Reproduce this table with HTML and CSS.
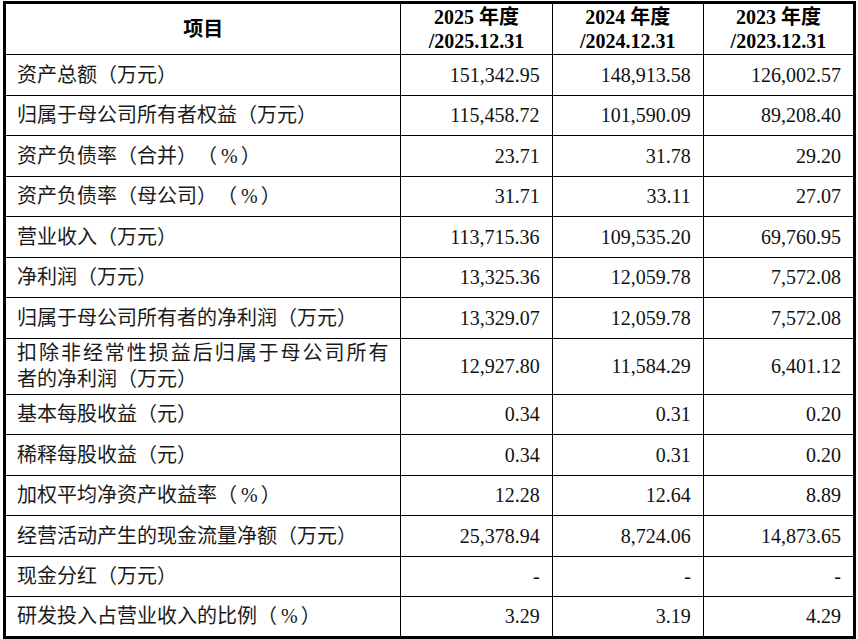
FILE: index.html
```html
<!DOCTYPE html>
<html lang="zh-CN">
<head>
<meta charset="utf-8">
<title>主要财务数据</title>
<link rel="stylesheet" href="styles.css">
</head>
<body>
<table class="fin">
  <colgroup>
    <col class="c-item">
    <col class="c-num">
    <col class="c-num">
    <col class="c-num">
  </colgroup>
  <thead>
    <tr class="head">
      <th>项目</th>
      <th>2025 年度<br>/2025.12.31</th>
      <th>2024 年度<br>/2024.12.31</th>
      <th>2023 年度<br>/2023.12.31</th>
    </tr>
  </thead>
  <tbody>
    <tr><td class="lbl">资产总额（万元）</td><td>151,342.95</td><td>148,913.58</td><td>126,002.57</td></tr>
    <tr><td class="lbl">归属于母公司所有者权益（万元）</td><td>115,458.72</td><td>101,590.09</td><td>89,208.40</td></tr>
    <tr><td class="lbl">资产负债率（合并）（<span class="pct">%</span>）</td><td>23.71</td><td>31.78</td><td>29.20</td></tr>
    <tr><td class="lbl">资产负债率（母公司）（<span class="pct">%</span>）</td><td>31.71</td><td>33.11</td><td>27.07</td></tr>
    <tr><td class="lbl">营业收入（万元）</td><td>113,715.36</td><td>109,535.20</td><td>69,760.95</td></tr>
    <tr><td class="lbl">净利润（万元）</td><td>13,325.36</td><td>12,059.78</td><td>7,572.08</td></tr>
    <tr><td class="lbl">归属于母公司所有者的净利润（万元）</td><td>13,329.07</td><td>12,059.78</td><td>7,572.08</td></tr>
    <tr class="tall"><td class="lbl"><span class="jline">扣除非经常性损益后归属于母公司所有</span>者的净利润（万元）</td><td>12,927.80</td><td>11,584.29</td><td>6,401.12</td></tr>
    <tr><td class="lbl">基本每股收益（元）</td><td>0.34</td><td>0.31</td><td>0.20</td></tr>
    <tr><td class="lbl">稀释每股收益（元）</td><td>0.34</td><td>0.31</td><td>0.20</td></tr>
    <tr><td class="lbl">加权平均净资产收益率（<span class="pct">%</span>）</td><td>12.28</td><td>12.64</td><td>8.89</td></tr>
    <tr><td class="lbl">经营活动产生的现金流量净额（万元）</td><td>25,378.94</td><td>8,724.06</td><td>14,873.65</td></tr>
    <tr><td class="lbl">现金分红（万元）</td><td>-</td><td>-</td><td>-</td></tr>
    <tr><td class="lbl">研发投入占营业收入的比例（<span class="pct">%</span>）</td><td>3.29</td><td>3.19</td><td>4.29</td></tr>
  </tbody>
</table>
</body>
</html>
```

FILE: styles.css
```css
html, body {
  margin: 0;
  padding: 0;
  background: #ffffff;
}

body {
  padding: 1px 0 0 3px;
  font-family: "Liberation Serif", "Noto Sans CJK SC", serif;
  color: #111111;
  text-spacing-trim: space-all;
}

.fin {
  border-collapse: collapse;
  table-layout: fixed;
  width: 853px;
  border: 3px solid #000;
  font-size: 20px;
  text-spacing-trim: space-all;
}

.c-item { width: 396px; }
.c-num { width: 151px; }

.fin th,
.fin td {
  border: 1px solid #000;
  padding: 0 12px 0 11px;
  vertical-align: middle;
  text-align: right;
  line-height: 26px;
  white-space: nowrap;
}

.fin thead th {
  border-top: 3px solid #000;
  text-align: center;
  font-weight: bold;
  line-height: 24px;
  color: #000;
  padding: 0 4px;
}

.head { height: 52px; }

.fin tbody tr { height: 40.5px; }
.fin tbody tr.tall { height: 56px; }

.fin td.lbl {
  text-align: left;
  white-space: normal;
  color: #1a1a1a;
}

.pct {
  margin: 0 3px 0 4px;
}

.jline {
  display: block;
  text-align: justify;
  text-align-last: justify;
}

.fin td:first-child,
.fin th:first-child { border-left: 3px solid #000; }
.fin td:last-child,
.fin th:last-child { border-right: 3px solid #000; }
.fin tbody tr:last-child td { border-bottom: 3px solid #000; }
```
